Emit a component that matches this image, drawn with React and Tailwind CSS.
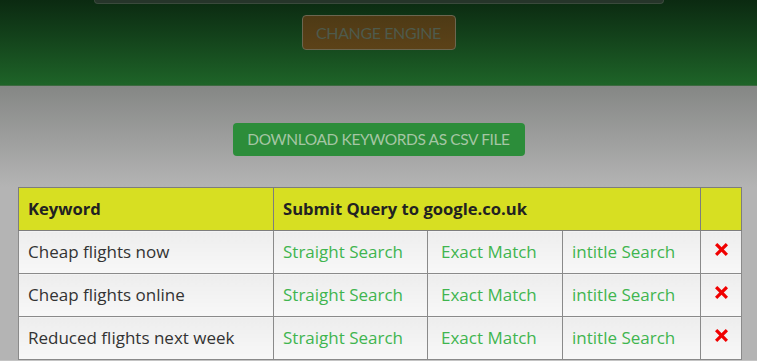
import { X } from 'lucide-react'

const rows = ['Cheap flights now', 'Cheap flights online', 'Reduced flights next week']

export default function App() {
  return (
    <div className="w-[757px] h-[361px] overflow-hidden bg-[#c4c4c4]" style={{ fontFamily: 'Lato, "Open Sans", sans-serif' }}>
      {/* top band */}
      <div className="h-[86px] bg-gradient-to-b from-[#0b2a11] to-[#1e6428] border-b border-[#3c6a40] flex flex-col items-center">
        <div className="w-[570px] h-[4px] rounded-b bg-[#26352a] border border-t-0 border-[#3a4a3c]" />
        <button className="mt-[11px] w-[154px] h-[35px] rounded bg-gradient-to-b from-[#4e3a15] to-[#5c4218] border border-[#6b6650] text-[#4e5a4c] text-[16px] tracking-tight">
          CHANGE ENGINE
        </button>
      </div>

      {/* gray area */}
      <div className="bg-gradient-to-b from-[#858785] to-[#b4b4b4] h-[101px] flex justify-center pt-[37px]">
        <button className="w-[292px] h-[33px] rounded-sm bg-[#2c8d3a] text-[#a5c6a4] text-[15.5px] tracking-tight">
          DOWNLOAD KEYWORDS AS CSV FILE
        </button>
      </div>

      <div className="bg-[#b4b4b4] px-[18px]" style={{ fontFamily: '"Open Sans", Lato, sans-serif' }}>
        <table className="w-[723px] border-collapse border border-[#7d7d7d] table-fixed">
          <colgroup>
            <col className="w-[255px]" />
            <col className="w-[154px]" />
            <col className="w-[135px]" />
            <col className="w-[138px]" />
            <col className="w-[41px]" />
          </colgroup>
          <thead>
            <tr className="bg-[#d7df22] h-[43px] text-[#222] text-[16.6px] font-bold">
              <th className="border border-[#7d7d7d] text-left pl-[9px]">Keyword</th>
              <th colSpan={3} className="border border-[#7d7d7d] text-left pl-[9px]">Submit Query to google.co.uk</th>
              <th className="border border-[#7d7d7d]" />
            </tr>
          </thead>
          <tbody>
            {rows.map(r => (
              <tr key={r} className="h-[43px] text-[17px]">
                <td className="border border-[#8a8a8a] bg-gradient-to-b from-[#ededed] to-[#f8f8f8] pl-[9px] text-[#333]">{r}</td>
                <td className="border border-[#8a8a8a] bg-gradient-to-b from-[#ededed] to-[#f8f8f8] pl-[9px] text-[#3fb54f]">Straight Search</td>
                <td className="border border-[#8a8a8a] bg-gradient-to-b from-[#ededed] to-[#f8f8f8] pl-[13px] text-[#3fb54f]">Exact Match</td>
                <td className="border border-[#8a8a8a] bg-gradient-to-b from-[#ededed] to-[#f8f8f8] pl-[9px] text-[#3fb54f]">intitle Search</td>
                <td className="border border-[#8a8a8a] bg-gradient-to-b from-[#ededed] to-[#f8f8f8] align-top pt-[10px]">
                  <div className="flex justify-center">
                    <X size={17} strokeWidth={4.5} color="#f00000" strokeLinecap="square" />
                  </div>
                </td>
              </tr>
            ))}
          </tbody>
        </table>
      </div>
    </div>
  )
}
